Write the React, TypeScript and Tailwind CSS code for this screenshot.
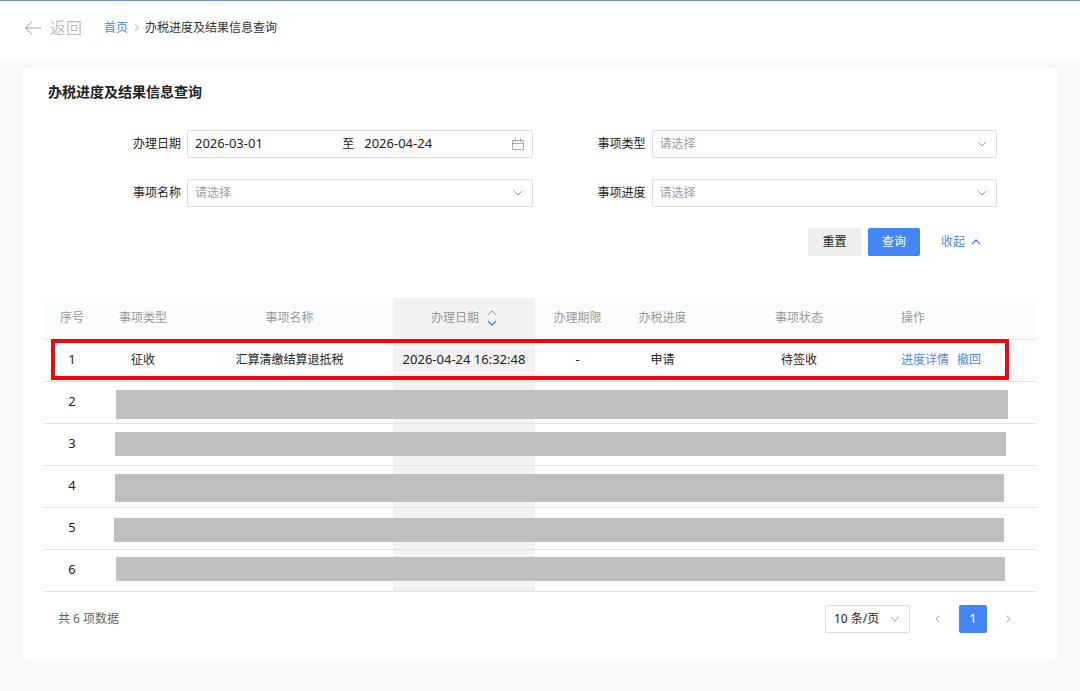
import type { ReactNode } from 'react'

interface SelectFieldProps {
  id: string
  label: string
}

interface RedactedRow {
  no: number
  mask: string
}

const REDACTED_ROWS: RedactedRow[] = [
  { no: 2, mask: 'left-[72px] right-[28px] top-[9px] h-[29px]' },
  { no: 3, mask: 'left-[71px] right-[30px] top-[9px] h-[24px]' },
  { no: 4, mask: 'left-[71px] right-[32px] top-[9px] h-[28px]' },
  { no: 5, mask: 'left-[70px] right-[32px] top-[11px] h-[24px]' },
  { no: 6, mask: 'left-[72px] right-[31px] top-[8px] h-[24px]' },
]

type Direction = 'up' | 'down' | 'left' | 'right'

const CHEVRONS: Record<Direction, string> = {
  up: 'M1 7 5 3l4 4',
  down: 'M1 3l4 4 4-4',
  left: 'M6.5 1.500 3 5l3.500 3.500',
  right: 'M3.500 1.500 7 5 3.500 8.500',
}

function Chevron({ dir, className }: { dir: Direction; className: string }) {
  return (
    <svg viewBox="0 0 10 10" className={className} fill="none" stroke="currentColor" aria-hidden="true">
      <path d={CHEVRONS[dir]} />
    </svg>
  )
}

function Field({ id, label, children }: { id: string; label: string; children: ReactNode }) {
  return (
    <div className="flex items-center gap-1.5">
      <label htmlFor={id} className="w-[113px] shrink-0 text-right">
        {label}
      </label>
      {children}
    </div>
  )
}

function SelectField({ id, label }: SelectFieldProps) {
  return (
    <Field id={id} label={label}>
      <div className="relative flex-1">
        <select
          id={id}
          className="block h-7 w-full appearance-none rounded-xs border border-[#dcdcdc] bg-white px-[7px] text-[#a0a0a0] outline-none"
        >
          <option>请选择</option>
        </select>
        <Chevron
          dir="down"
          className="pointer-events-none absolute right-[10px] top-[9px] size-[10px] text-[#999]"
        />
      </div>
    </Field>
  )
}

function PageHeader() {
  return (
    <header className="flex h-[60px] items-center border-t border-[#6f93c9] bg-white px-6 pb-1.5">
      <button type="button" className="flex items-center gap-2 text-base text-[#c0c0c0]">
        <svg viewBox="0 0 18 18" className="size-[18px]" fill="none" stroke="currentColor" aria-hidden="true">
          <path d="M17 9H1.500M8 2.500 1.500 9 8 15.500" strokeWidth="1.300" />
        </svg>
        返回
      </button>
      <nav className="ml-[22px] flex items-center text-[#333]">
        <a href="#home" className="text-[#4a86f0]">
          首页
        </a>
        <Chevron dir="right" className="mx-1 size-[9px] text-[#999]" />
        <span>办税进度及结果信息查询</span>
      </nav>
    </header>
  )
}

function SearchForm() {
  return (
    <form className="ml-6 mr-[39px]" onSubmit={(e) => e.preventDefault()}>
      <div className="grid grid-cols-2 gap-y-[21px]">
        <Field id="date-from" label="办理日期">
          <div className="flex h-7 min-w-0 flex-1 items-center rounded-xs border border-[#dcdcdc] px-[7px]">
            <input
              id="date-from"
              defaultValue="2026-03-01"
              className="w-0 flex-1 text-[13px] outline-none"
            />
            <span className="w-[22px]">至</span>
            <input
              aria-label="结束日期"
              defaultValue="2026-04-24"
              className="w-0 flex-1 text-[13px] outline-none"
            />
            <svg
              viewBox="0 0 12 12"
              className="mr-px size-3 text-[#aaa]"
              fill="none"
              stroke="currentColor"
              aria-hidden="true"
            >
              <path d="M.5 2.500h11v9H.500zM.500 5.500h11M3.500 0v4M8.500 0v4" />
            </svg>
          </div>
        </Field>
        <SelectField id="item-type" label="事项类型" />
        <SelectField id="item-name" label="事项名称" />
        <SelectField id="item-progress" label="事项进度" />
      </div>
      <div className="mt-[21px] flex items-center justify-end pr-4">
        <button type="reset" className="h-7 w-[53px] rounded-xs bg-[#eee]">
          重置
        </button>
        <button type="submit" className="ml-[7px] h-7 w-[52px] rounded-xs bg-[#4285f4] text-white">
          查询
        </button>
        <button type="button" className="ml-[21px] flex items-center gap-1.5 text-[#4a86f0]">
          收起
          <Chevron dir="up" className="size-[10px] stroke-[1.3]" />
        </button>
      </div>
    </form>
  )
}

function ResultTable() {
  return (
    <table className="mt-[42px] w-full table-fixed text-center">
      <colgroup>
        <col className="w-14" />
        <col className="w-[86px]" />
        <col />
        <col className="w-[142px]" />
        <col className="w-[85px]" />
        <col className="w-[85px]" />
        <col className="w-[188px]" />
        <col className="w-[143px]" />
      </colgroup>
      <thead>
        <tr className="h-[41px] border-b border-[#e2e2e2] bg-[#fafcfd] text-[#999] *:font-normal">
          <th>序号</th>
          <th>事项类型</th>
          <th>事项名称</th>
          <th className="bg-[#f2f2f2]">
            <button type="button" className="inline-flex items-center gap-2 align-middle">
              办理日期
              <span className="flex flex-col">
                <Chevron dir="up" className="size-[10px]" />
                <Chevron dir="down" className="size-[10px] stroke-[1.3] text-[#4a86f0]" />
              </span>
            </button>
          </th>
          <th>办理期限</th>
          <th>办税进度</th>
          <th>事项状态</th>
          <th className="pl-2 text-left">操作</th>
        </tr>
      </thead>
      <tbody>
        <tr className="relative h-[42px] border-b border-[#e2e2e2]">
          <td className="text-[13px]">
            1
            <div className="pointer-events-none absolute left-[7px] right-[27px] top-0 h-[41px] border-4 border-[#f50505]" />
          </td>
          <td>征收</td>
          <td>汇算清缴结算退抵税</td>
          <td className="bg-[#f2f2f2] text-[13px]">2026-04-24 16:32:48</td>
          <td className="text-[13px]">-</td>
          <td>申请</td>
          <td>待签收</td>
          <td className="pl-2 text-left text-[#4a86f0]">
            <a href="#detail">进度详情</a>
            <a href="#revoke" className="ml-2">
              撤回
            </a>
          </td>
        </tr>
        {REDACTED_ROWS.map((row) => (
          <tr key={row.no} className="relative h-[42px] border-b border-[#e2e2e2]">
            <td className="text-[13px]">{row.no}</td>
            <td colSpan={2} />
            <td className="bg-[#f2f2f2]" />
            <td colSpan={4}>
              <div className={`absolute bg-[#bfbfbf] ${row.mask}`} />
            </td>
          </tr>
        ))}
      </tbody>
    </table>
  )
}

function Pagination() {
  return (
    <div className="mt-[13px] flex items-center px-3.5">
      <span className="mr-auto text-[#666]">共 6 项数据</span>
      <div className="relative mr-3.5">
        <select
          aria-label="每页条数"
          className="block h-7 w-[85px] appearance-none rounded-xs border border-[#dcdcdc] bg-white px-2 outline-none"
        >
          <option>10 条/页</option>
        </select>
        <Chevron
          dir="down"
          className="pointer-events-none absolute right-[10px] top-[9px] size-[10px] text-[#aaa]"
        />
      </div>
      <div className="flex gap-[7px]">
        <button type="button" aria-label="上一页" className="grid size-7 place-items-center text-[#aaa]">
          <Chevron dir="left" className="size-[10px]" />
        </button>
        <button type="button" className="size-7 rounded-xs bg-[#4285f4] text-[13px] text-white">
          1
        </button>
        <button type="button" aria-label="下一页" className="grid size-7 place-items-center text-[#aaa]">
          <Chevron dir="right" className="size-[10px]" />
        </button>
      </div>
    </div>
  )
}

export default function App() {
  return (
    <div className="min-h-screen bg-[#f6f8fa] font-['Noto_Sans','Noto_Sans_CJK_SC',sans-serif] text-xs text-[#222]">
      <PageHeader />
      <main className="mx-[23px] mt-2 rounded-sm bg-white px-[21px] pb-7 pt-3.5">
        <h1 className="mb-7 ml-1 text-sm font-bold">办税进度及结果信息查询</h1>
        <SearchForm />
        <ResultTable />
        <Pagination />
      </main>
    </div>
  )
}
